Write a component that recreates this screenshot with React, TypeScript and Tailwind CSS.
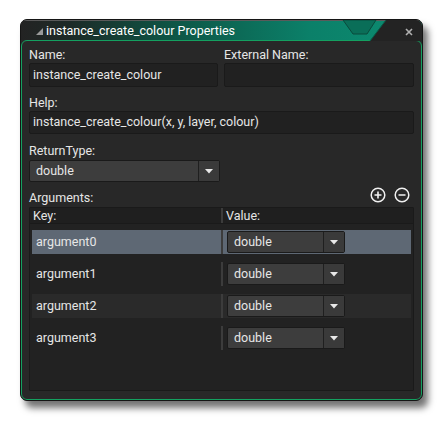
import React from "react";

function Select({ w, pl, text }: { w: string; pl: string; text: string }) {
  return (
    <div className={`flex h-[22px] ${w} rounded-[2px] border border-[#1a1a1a] bg-[#3d3d3d]`}>
      <div className={`flex flex-1 items-center ${pl} text-[12.5px] text-[#e6e6e6]`}>{text}</div>
      <div className="flex w-[21px] items-center justify-center border-l border-[#1f1f1f] bg-[#3a3a3a]">
        <svg width="8" height="5" viewBox="0 0 8 5">
          <polygon points="0,0 8,0 4,4.5" fill="#e8e8e8" />
        </svg>
      </div>
    </div>
  );
}

function Row({ name, bg }: { name: string; bg: string }) {
  return (
    <div className={`flex h-[24px] items-center ${bg}`}>
      <div className="flex w-[189px] items-center pl-[4px] text-[12.5px] text-[#e6e6e6]">{name}</div>
      <div className="h-full w-[2px] bg-[#3c3c3c]" />
      <div className="pl-[4px]">
        <Select w="w-[118px]" pl="pl-[6px]" text="double" />
      </div>
    </div>
  );
}

export default function App() {
  return (
    <div className="h-[421px] w-[443px] bg-white pl-[20px] pt-[19px] font-['Roboto',sans-serif]">
      <div className="flex h-[382px] w-[403px] flex-col overflow-hidden rounded-[7px] border border-[#151515] bg-[#282828] shadow-[5px_7px_7px_rgba(0,0,0,0.55)]">
        {/* title bar */}
        <div className="relative flex h-[20px] shrink-0 items-center border-t border-[#5a5a5a] bg-[linear-gradient(90deg,#232323_0%,#1d2a27_12%,#0d5646_38%,#0b8069_72%,#0c8d71_100%)]">
          <svg className="ml-[15px] mt-[1px]" width="7" height="7" viewBox="0 0 7 7">
            <polygon points="7,0 7,7 0,7" fill="#9a9a9a" />
          </svg>
          <span className="ml-[3px] text-[12.5px] leading-[14px] text-white">instance_create_colour Properties</span>
          <svg className="absolute left-0 top-[-1px]" width="403" height="21" viewBox="0 0 403 21">
            <polygon points="322,0 355,0 346,14 332,14" fill="#0a6e58" stroke="#0b4a3c" strokeWidth="1" />
            <polygon points="365,0 403,0 403,21 349,21" fill="#232323" />
            <line x1="365" y1="0" x2="349" y2="21" stroke="#0a5a48" strokeWidth="1" />
          </svg>
          <svg className="absolute right-[9px] top-[7px]" width="8" height="8" viewBox="0 0 8 8">
            <path d="M1 1 L7 7 M7 1 L1 7" stroke="#b0b0b0" strokeWidth="1.6" />
          </svg>
        </div>
        {/* body */}
        <div className="flex flex-1 flex-col rounded-[6px] border border-[#14a060] bg-[#282828] px-[7px] pb-[8px]">
          <div className="mt-[7px] flex gap-[6px]">
            <div className="flex w-[189px] flex-col">
              <div className="h-[14px] text-[12.5px] leading-[14px] text-[#e6e6e6]">Name:</div>
              <div className="mt-[1px] flex h-[24px] items-center rounded-[2px] border border-[#1a1a1a] bg-[#212121] pl-[3px] text-[12.5px] text-[#e6e6e6]">
                instance_create_colour
              </div>
            </div>
            <div className="flex flex-1 flex-col">
              <div className="h-[14px] text-[12.5px] leading-[14px] text-[#e6e6e6]">External Name:</div>
              <div className="mt-[1px] h-[24px] rounded-[2px] border border-[#1a1a1a] bg-[#212121]" />
            </div>
          </div>
          <div className="mt-[9px] h-[14px] text-[12.5px] leading-[14px] text-[#e6e6e6]">Help:</div>
          <div className="mt-[1px] flex h-[23px] items-center rounded-[2px] border border-[#1a1a1a] bg-[#212121] pl-[3px] text-[12.5px] text-[#e6e6e6]">
            instance_create_colour(x, y, layer, colour)
          </div>
          <div className="mt-[10px] h-[14px] text-[12.5px] leading-[14px] text-[#e6e6e6]">ReturnType:</div>
          <div className="mt-[2px]">
            <Select w="w-[191px]" pl="pl-[6px]" text="double" />
          </div>
          <div className="mt-[9px] flex h-[14px] items-center justify-between">
            <div className="text-[12.5px] leading-[14px] text-[#e6e6e6]">Arguments:</div>
            <div className="mr-[4px] mt-[-6px] flex gap-[8px]">
              <svg width="16" height="16" viewBox="0 0 16 16">
                <circle cx="8" cy="8" r="6.8" fill="none" stroke="#f0f0f0" strokeWidth="1.5" />
                <path d="M4.5 8 H11.5 M8 4.5 V11.5" stroke="#f0f0f0" strokeWidth="1.6" />
              </svg>
              <svg width="16" height="16" viewBox="0 0 16 16">
                <circle cx="8" cy="8" r="6.8" fill="none" stroke="#f0f0f0" strokeWidth="1.5" />
                <path d="M4.5 8 H11.5" stroke="#f0f0f0" strokeWidth="1.6" />
              </svg>
            </div>
          </div>
          <div className="mt-[2px] flex flex-1 flex-col rounded-[1px] border border-[#1a1a1a] bg-[#222222]">
            <div className="flex h-[16px] items-center border-b border-[#1a1a1a] bg-[#1f1f1f]">
              <div className="w-[191px] pl-[3px] text-[12.5px] leading-[14px] text-[#e6e6e6]">Key:</div>
              <div className="h-full w-[2px] bg-[#3c3c3c]" />
              <div className="pl-[3px] text-[12.5px] leading-[14px] text-[#e6e6e6]">Value:</div>
            </div>
            <div className="flex flex-col gap-[8px] px-[2px] pt-[6px]">
              <Row name="argument0" bg="bg-[#5e6874]" />
              <Row name="argument1" bg="" />
              <Row name="argument2" bg="bg-[#2a2a2a]" />
              <Row name="argument3" bg="" />
            </div>
          </div>
        </div>
      </div>
    </div>
  );
}
